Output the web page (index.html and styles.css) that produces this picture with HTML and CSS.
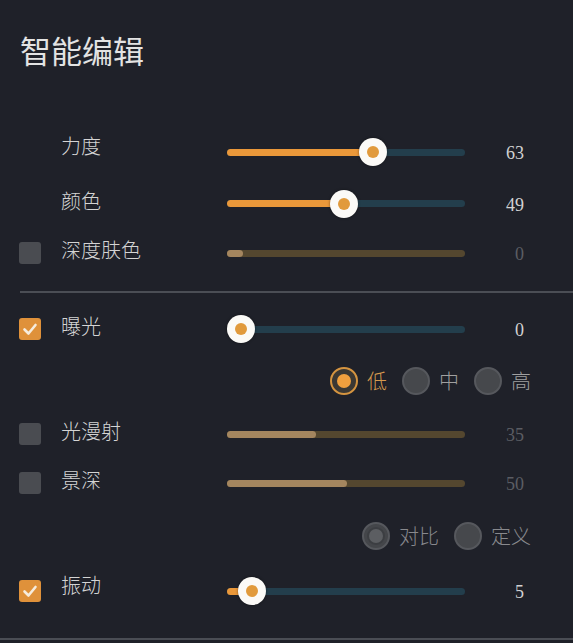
FILE: index.html
```html
<!DOCTYPE html>
<html lang="zh">
<head>
<meta charset="utf-8">
<link rel="stylesheet" href="styles.css">
</head>
<body>
<div class="panel">
  <div class="title">智能编辑</div>

  <div class="row r1">
    <span class="box none"></span>
    <span class="label hi">力度</span>
    <div class="slider"><div class="fill" style="width:146px"></div><span class="thumb" style="left:146px"></span></div>
    <span class="value">63</span>
  </div>

  <div class="row r2">
    <span class="box none"></span>
    <span class="label">颜色</span>
    <div class="slider"><div class="fill" style="width:117px"></div><span class="thumb" style="left:117px"></span></div>
    <span class="value">49</span>
  </div>

  <div class="row r3">
    <span class="box off"></span>
    <span class="label">深度肤色</span>
    <div class="slider dis"><div class="fill" style="width:16px"></div></div>
    <span class="value dim">0</span>
  </div>

  <div class="divider"></div>

  <div class="row r4">
    <span class="box on"><svg viewBox="0 0 22 22" width="22" height="22"><polyline points="5.5,11.5 9.5,15.5 16.5,7" fill="none" stroke="#f6ecdd" stroke-width="2.6" stroke-linecap="round" stroke-linejoin="round"/></svg></span>
    <span class="label">曝光</span>
    <div class="slider"><span class="thumb" style="left:14px"></span></div>
    <span class="value">0</span>
  </div>

  <div class="radios rr1">
    <span class="opt sel"><span class="radio sel"></span>低</span>
    <span class="opt"><span class="radio"></span>中</span>
    <span class="opt"><span class="radio"></span>高</span>
  </div>

  <div class="row r5">
    <span class="box off"></span>
    <span class="label">光漫射</span>
    <div class="slider dis"><div class="fill" style="width:89px"></div></div>
    <span class="value dim">35</span>
  </div>

  <div class="row r6">
    <span class="box off"></span>
    <span class="label">景深</span>
    <div class="slider dis"><div class="fill" style="width:120px"></div></div>
    <span class="value dim">50</span>
  </div>

  <div class="radios rr2 disabled">
    <span class="opt"><span class="radio dsel"></span>对比</span>
    <span class="opt"><span class="radio"></span>定义</span>
  </div>

  <div class="row r7">
    <span class="box on"><svg viewBox="0 0 22 22" width="22" height="22"><polyline points="5.5,11.5 9.5,15.5 16.5,7" fill="none" stroke="#f6ecdd" stroke-width="2.6" stroke-linecap="round" stroke-linejoin="round"/></svg></span>
    <span class="label hi">振动</span>
    <div class="slider"><div class="fill" style="width:25px"></div><span class="thumb" style="left:25px"></span></div>
    <span class="value">5</span>
  </div>

  <div class="bottomline"></div>
</div>
</body>
</html>
```

FILE: styles.css
```css
html, body {
  margin: 0;
  padding: 0;
}
body {
  background: #1f2129;
  width: 573px;
  height: 643px;
  overflow: hidden;
  font-family: "Noto Sans CJK SC", "Noto Sans", sans-serif;
}
.panel {
  display: flex;
  flex-direction: column;
  height: 643px;
}
.title {
  height: 126px;
  box-sizing: border-box;
  padding: 31px 0 0 20px;
  font-size: 31px;
  line-height: 38px;
  color: #e3e3e3;
}
.row {
  display: flex;
  align-items: center;
  padding-left: 19px;
  flex: none;
}
.r1 { height: 52px; }
.r2 { height: 51px; }
.r3 { height: 48px; }
.r4 { height: 46px; }
.r5 { height: 48px; }
.r6 { height: 50px; }
.r7 { height: 54px; }
.box {
  width: 22px;
  height: 22px;
  border-radius: 3px;
  margin-right: 20px;
  flex: none;
  display: flex;
}
.box.off { background: #4a4c51; }
.box.on { background: #df913a; }
.label {
  width: 166px;
  flex: none;
  font-size: 20px;
  font-weight: 300;
  line-height: 26px;
  color: #d4d4d4;
  padding-bottom: 6px;
}
.label.hi { padding-bottom: 12px; }
.slider {
  position: relative;
  width: 238px;
  height: 7px;
  flex: none;
  border-radius: 4px;
  background: #233e4c;
}
.slider.dis { background: #54472f; }
.fill {
  position: absolute;
  left: 0;
  top: 0;
  bottom: 0;
  border-radius: 4px;
  background: #ea983a;
}
.slider.dis .fill { background: #a4865f; }
.thumb {
  position: absolute;
  top: 50%;
  width: 28px;
  height: 28px;
  margin: -14px 0 0 -14px;
  border-radius: 50%;
  background: #fbfaf7;
  display: flex;
  align-items: center;
  justify-content: center;
  box-shadow: 0 0 3px rgba(0,0,0,0.45);
}
.thumb::after {
  content: "";
  width: 12px;
  height: 12px;
  border-radius: 50%;
  background: #e19a3c;
}
.value {
  width: 59px;
  flex: none;
  text-align: right;
  font-family: "Liberation Serif", "DejaVu Serif", serif;
  font-size: 18px;
  color: #d2d2d2;
  padding-top: 3px;
}
.value.dim { color: #5b5d63; }
.divider {
  height: 2px;
  margin: 14px 0 13px 20px;
  background: #4b4e55;
  flex: none;
}
.radios {
  display: flex;
  justify-content: flex-end;
  align-items: center;
  gap: 15px;
  padding-right: 42px;
  flex: none;
}
.rr1 { height: 58px; }
.rr2 { height: 56px; }
.opt {
  display: flex;
  align-items: center;
  gap: 9px;
  font-size: 20px;
  font-weight: 300;
  line-height: 26px;
  color: #a0a0a0;
}
.opt.sel { color: #d69a4f; }
.radios.disabled .opt { color: #88898d; }
.radio {
  width: 28px;
  height: 28px;
  box-sizing: border-box;
  border-radius: 50%;
  border: 2px solid #56585d;
  background: #46484c;
  display: flex;
  align-items: center;
  justify-content: center;
}
.radio.sel {
  border-color: #d49440;
  background: #3b3833;
}
.radio.sel::after {
  content: "";
  width: 14px;
  height: 14px;
  border-radius: 50%;
  background: #f0a03e;
}
.radio.dsel {
  background: #44464a;
}
.radio.dsel::after {
  content: "";
  width: 14px;
  height: 14px;
  border-radius: 50%;
  background: #5c5e62;
  box-shadow: 0 0 0 2px #3c3e42;
}
.bottomline {
  height: 2px;
  margin-top: 20px;
  background: #4a4d54;
  flex: none;
}
```
